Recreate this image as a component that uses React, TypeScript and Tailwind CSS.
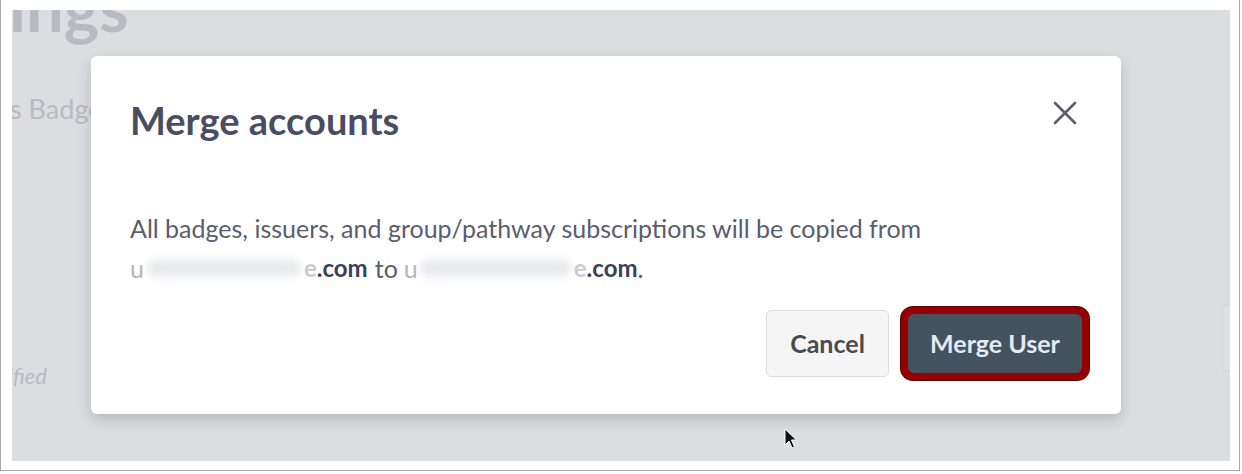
export default function App() {
  return (
    <div className="h-[474px] w-[1242px] bg-white font-['Lato',sans-serif]">
      <div className="flex h-[471px] w-[1240px] border-x border-b border-[#a8a8a8] pb-[9px] pl-[11px] pr-[9px] pt-[10px]">
        <div className="relative flex-1 overflow-hidden bg-[#dcdde1]">
          {/* page behind the overlay */}
          <div className="flex flex-col text-[#b7bac1]">
            <div className="-ml-[3px] -mt-[37px] text-[67px] font-bold leading-none">ings</div>
            <div className="-ml-[2px] mt-[53px] text-[27px] leading-[32px]">s Badges</div>
            <div className="-ml-[4px] mt-[237px] text-[22px] italic leading-[28px]">ified</div>
          </div>
          <div className="absolute right-0 top-[295px] h-[66px] w-[8px] rounded-l-[4px] border border-r-0 border-[#d2d3d8] bg-[#dfe0e4]" />

          {/* modal */}
          <div className="absolute left-[79px] top-[46px] flex w-[1030px] flex-col rounded-[6px] bg-white pb-[34px] pl-[39px] pr-[32px] pt-[44px] shadow-[0_6px_14px_rgba(0,0,0,0.16)]">
            <div className="flex items-start justify-between">
              <h2 className="text-[38px] font-bold leading-[40px] text-[#4a4d61]">Merge accounts</h2>
              <button className="mr-[7px] mt-[-4px] flex h-[34px] w-[34px] items-center justify-center">
                <svg width="24" height="24" viewBox="0 0 24 24" fill="none" stroke="#5b5e6d" strokeWidth="2.6" strokeLinecap="round">
                  <path d="M2 2 L22 22 M22 2 L2 22" />
                </svg>
              </button>
            </div>

            <div className="mt-[68px] whitespace-nowrap text-[25px] leading-[40px] text-[#5a5d6b]">
              <p>All badges, issuers, and group/pathway subscriptions will be copied from</p>
              <p className="flex items-center">
                <span className="text-[#b3b5bd]">u</span>
                {/* redacted address */}
                <span className="mx-[2px] inline-block h-[18px] w-[156px] rounded-full bg-[#e9eaed] blur-[4px]" />
                <span className="text-[24px] font-bold text-[#3c4056]">
                  <span className="text-[#c8cad0]">e</span>.com
                </span>
                <span className="ml-[7px]">to</span>
                <span className="ml-[6px] text-[#b3b5bd]">u</span>
                <span className="mx-[2px] inline-block h-[18px] w-[152px] rounded-full bg-[#e9eaed] blur-[4px]" />
                <span className="text-[24px] font-bold text-[#3c4056]">
                  <span className="text-[#c8cad0]">e</span>.com
                </span>
                <span>.</span>
              </p>
            </div>

            <div className="mt-[19px] flex items-center justify-end gap-[12px]">
              <button className="h-[67px] w-[123px] rounded-[5px] border border-[#dcdcde] bg-[#f5f5f6] text-[25px] font-bold text-[#4b4b4f]">
                Cancel
              </button>
              <div className="rounded-[12px] bg-[#950000] p-[7px] shadow-[0_0_0_1px_#5a0000]">
                <button className="h-[59px] w-[174px] rounded-[6px] bg-[#44525f] text-[25px] font-bold text-[#e3ebf1]">
                  Merge User
                </button>
              </div>
            </div>
          </div>

          {/* mouse pointer */}
          <svg className="absolute left-[772px] top-[418px]" width="14" height="22" viewBox="0 0 14 22">
            <path d="M1 1 L1 17 L5 13 L8 20 L10.5 19 L7.5 12 L12.5 12 Z" fill="#111" stroke="#fff" strokeWidth="1" />
          </svg>
        </div>
      </div>
    </div>
  );
}
